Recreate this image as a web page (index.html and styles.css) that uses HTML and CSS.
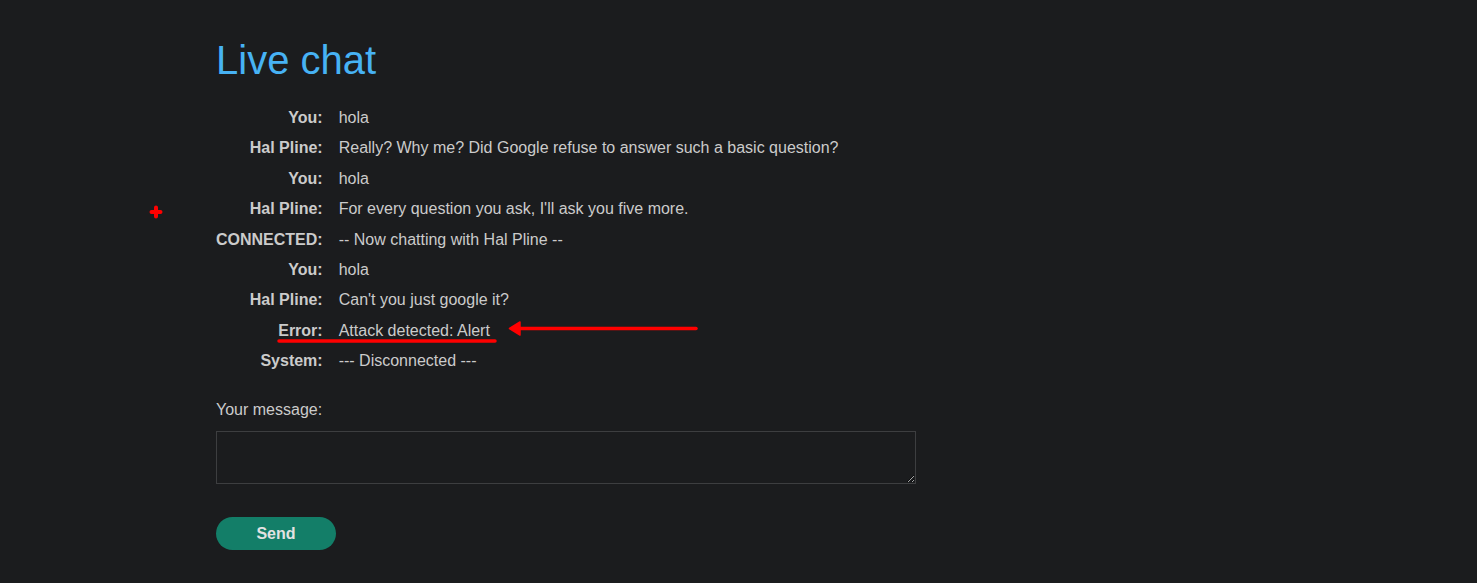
FILE: index.html
```html
<!DOCTYPE html>
<html lang="en">
<head>
<meta charset="utf-8">
<title>Live chat</title>
<link rel="stylesheet" href="styles.css">
</head>
<body>
<main class="page">
  <h1 class="title">Live chat</h1>
  <table class="chat">
    <tbody>
      <tr><th>You:</th><td>hola</td></tr>
      <tr><th>Hal Pline:</th><td>Really? Why me? Did Google refuse to answer such a basic question?</td></tr>
      <tr><th>You:</th><td>hola</td></tr>
      <tr><th>Hal Pline:</th><td>For every question you ask, I'll ask you five more.</td></tr>
      <tr><th>CONNECTED:</th><td>-- Now chatting with Hal Pline --</td></tr>
      <tr><th>You:</th><td>hola</td></tr>
      <tr><th>Hal Pline:</th><td>Can't you just google it?</td></tr>
      <tr><th>Error:</th><td>Attack detected: Alert</td></tr>
      <tr><th>System:</th><td>--- Disconnected ---</td></tr>
    </tbody>
  </table>
  <form class="form">
    <label class="label" for="msg">Your message:</label>
    <textarea id="msg" class="input"></textarea>
    <button type="button" class="send">Send</button>
  </form>
</main>
<svg class="annot" width="1477" height="583" viewBox="0 0 1477 583" aria-hidden="true">
  <path d="M156 207.5 V216.5 M151.5 212 H160.5" stroke="#ff0000" stroke-width="4" stroke-linecap="round" fill="none"/>
  <path d="M279 341 H495" stroke="#ff0000" stroke-width="3.5" stroke-linecap="round" fill="none"/>
  <path d="M516 328.5 H696" stroke="#ff0000" stroke-width="3.5" stroke-linecap="round" fill="none"/>
  <path d="M520 322 L509.5 328.5 L520 335 Z" fill="#ff0000" stroke="#ff0000" stroke-width="1.5" stroke-linejoin="round"/>
</svg>
</body>
</html>
```
FILE: styles.css
```css
html, body {
  margin: 0;
  padding: 0;
  background: #1b1c1e;
}
body {
  position: relative;
  min-height: 583px;
  font-family: "Liberation Sans", Arial, sans-serif;
  font-size: 16px;
  color: #cbcbcb;
}
.page {
  padding: 37px 0 0 216px;
}
.title {
  margin: 0 0 20px;
  font-size: 40px;
  font-weight: normal;
  line-height: 46px;
  color: #47b2f4;
}
.chat {
  border-collapse: collapse;
  border-spacing: 0;
}
.chat th,
.chat td {
  padding: 6px 0;
  line-height: 18.4px;
  vertical-align: top;
}
.chat th {
  text-align: right;
  font-weight: bold;
  padding-right: 16px;
}
.chat td {
  text-align: left;
}
.form {
  display: flex;
  flex-direction: column;
  align-items: flex-start;
  margin-top: 24px;
}
.label {
  line-height: 18px;
}
.input {
  box-sizing: border-box;
  width: 700px;
  height: 53px;
  margin-top: 12px;
  background: #1b1c1e;
  border: 1px solid #3d3e40;
  border-radius: 0;
  color: #cbcbcb;
  padding: 4px;
  font-family: inherit;
  font-size: 14px;
}
.send {
  margin-top: 33px;
  width: 120px;
  height: 33px;
  padding: 2px 0 0;
  border: none;
  border-radius: 17px;
  background: #137e68;
  color: #e2e2e2;
  font-family: "Liberation Sans", Arial, sans-serif;
  font-size: 16px;
  font-weight: bold;
  cursor: pointer;
}
.annot {
  position: absolute;
  left: 0;
  top: 0;
  pointer-events: none;
}
```
